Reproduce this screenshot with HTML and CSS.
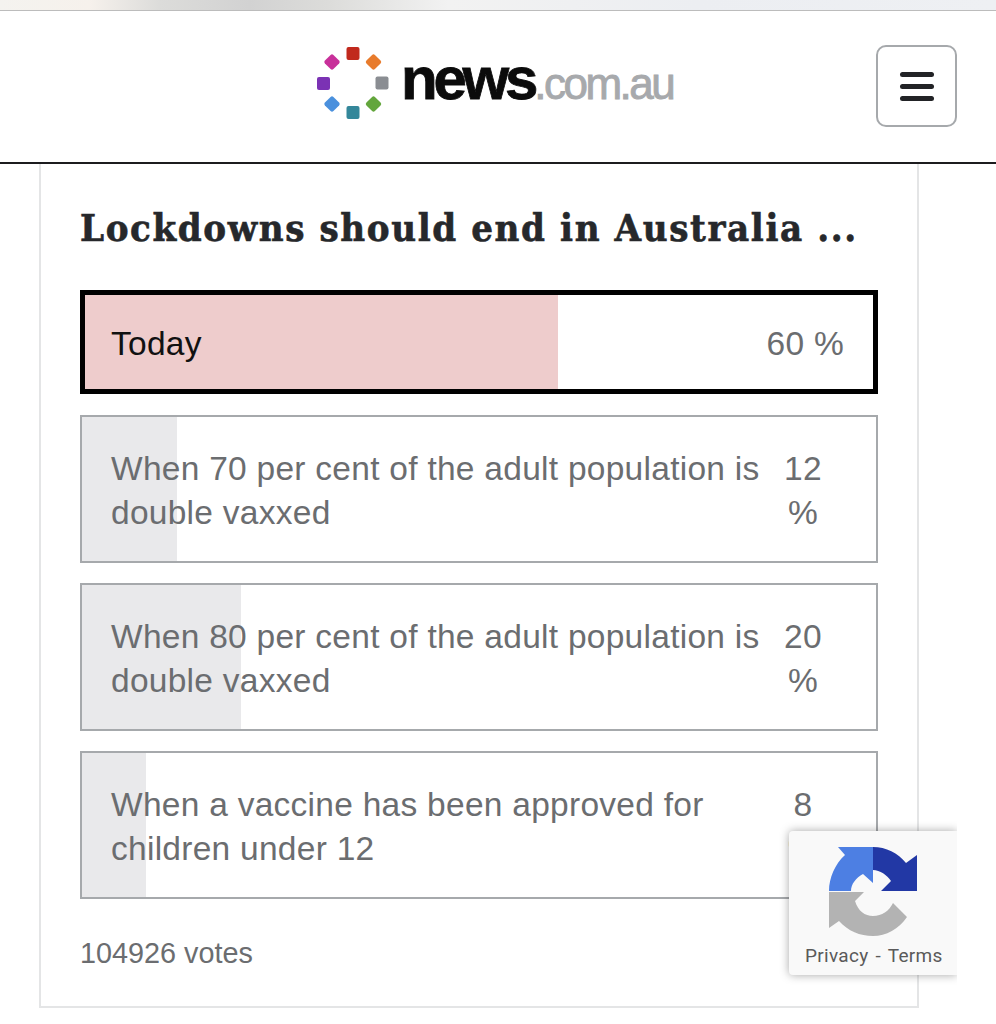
FILE: index.html
```html
<!DOCTYPE html>
<html>
<head>
<meta charset="utf-8">
<title>news.com.au poll</title>
<link rel="stylesheet" href="styles.css">
</head>
<body>
<div class="browser-strip"></div>
<header>
	<div class="logo">
		<svg class="logo-mark" width="72" height="72" viewBox="0 0 72 72">
			<rect x="29.5" y="0" width="13" height="13" rx="2" fill="#c1291d"/>
			<rect x="59.5" y="30" width="13" height="13" rx="2" fill="#8a8d92" transform="translate(-1 -.5)"/>
			<rect x="29.5" y="60" width="13" height="13" rx="2" fill="#34879a" transform="translate(0 -1)"/>
			<rect x="0" y="30" width="13" height="13" rx="2" fill="#7b32b4"/>
			<rect x="50.5" y="9" width="12" height="12" rx="2" fill="#e87b2c" transform="rotate(45 56.5 15)"/>
			<rect x="50.5" y="51" width="12" height="12" rx="2" fill="#63a63c" transform="rotate(45 56.5 57)"/>
			<rect x="9" y="51" width="12" height="12" rx="2" fill="#4a90dd" transform="rotate(45 15 57)"/>
			<rect x="9" y="9" width="12" height="12" rx="2" fill="#c8309a" transform="rotate(45 15 15)"/>
		</svg>
		<span class="logo-text"><span class="logo-news">news</span><span class="logo-domain">.com.au</span></span>
	</div>
	<button class="menu-btn">
		<span class="menu-bar"></span>
		<span class="menu-bar"></span>
		<span class="menu-bar"></span>
	</button>
</header>
<section class="poll">
	<h2 class="poll-title">Lockdowns should end in Australia ...</h2>
	<div class="option option-selected">
		<div class="option-fill" style="width: 60%"></div>
		<div class="option-label">Today</div>
		<div class="option-pct">60 %</div>
	</div>
	<div class="option">
		<div class="option-fill" style="width: 12%"></div>
		<div class="option-label">When 70 per cent of the adult population is double vaxxed</div>
		<div class="option-pct">12 %</div>
	</div>
	<div class="option">
		<div class="option-fill" style="width: 20%"></div>
		<div class="option-label">When 80 per cent of the adult population is double vaxxed</div>
		<div class="option-pct">20 %</div>
	</div>
	<div class="option">
		<div class="option-fill" style="width: 8%"></div>
		<div class="option-label">When a vaccine has been approved for children under 12</div>
		<div class="option-pct">8 %</div>
	</div>
	<div class="votes">104926 votes</div>
</section>
<div class="recaptcha">
	<svg class="recaptcha-icon" width="89" height="90" viewBox="0 0 89 90">
		<path d="M0 45C0 32 6 18 16 9L9 1H44V37L34 28C27 32 22 38 22 45Z" fill="#4d7fe3"/>
		<path d="M44 1C57 1 69 7 77 17L88 9V45H52L62 35C58 29 51 24 44 24Z" fill="#2238a5"/>
		<path d="M0 46H35L26 55C29 65 36 70 44 70C53 70 60 65 64 57L78 71C70 83 57 90 44 90C31 90 19 85 10 75L0 82Z" fill="#b3b3b3"/>
	</svg>
	<div class="recaptcha-links">Privacy - Terms</div>
</div>
</body>
</html>
```

FILE: styles.css
```css
body {
	margin: 0px;
	height: 1024px;
	overflow: hidden;
	position: relative;
	background-color: white;
	font-family: "Liberation Sans", Arial, sans-serif;
}
.browser-strip {
	height: 10px;
	background: linear-gradient(to right, #f4f3ef 0%, #f6f1ec 9%, #dcdcda 16%, #d2d2d2 25%, #dcdcda 33%, #f2f2f2 45%, #eceef2 70%, #eef0f3 100%);
	border-bottom: 1px solid #bcbcbc;
}
header {
	display: flex;
	align-items: center;
	box-sizing: border-box;
	height: 153px;
	padding: 0 39px 0 317px;
	border-bottom: 2px solid #1c1c1e;
}
.logo {
	display: flex;
	align-items: center;
	margin-top: -7px;
}
.logo-mark {
	overflow: visible;
}
.logo-text {
	margin-left: 12px;
	margin-bottom: 9px;
	white-space: nowrap;
}
.logo-news {
	font-size: 60px;
	font-weight: 700;
	letter-spacing: -4.2px;
	color: #0b0b0b;
	-webkit-text-stroke: 0.8px #0b0b0b;
}
.logo-domain {
	font-size: 44px;
	letter-spacing: -2.5px;
	color: #a7a9ac;
	-webkit-text-stroke: 0.9px #a7a9ac;
}
.menu-btn {
	display: flex;
	flex-direction: column;
	align-items: center;
	justify-content: center;
	gap: 7px;
	box-sizing: border-box;
	width: 81px;
	height: 82px;
	margin-left: auto;
	margin-top: -1px;
	padding: 0;
	background-color: white;
	border: 2px solid #a6a9ac;
	border-radius: 10px;
}
.menu-bar {
	width: 34px;
	height: 5px;
	border-radius: 3px;
	background-color: #222326;
}
.poll {
	box-sizing: border-box;
	width: 880px;
	height: 844px;
	margin-left: 39px;
	padding: 42px 39px 0;
	border: 2px solid #e4e5e6;
	border-top: none;
}
.poll-title {
	margin: 0 0 40px;
	font-family: "DejaVu Serif Condensed", "DejaVu Serif", serif;
	font-stretch: condensed;
	font-size: 38px;
	line-height: 44px;
	font-weight: 700;
	letter-spacing: 1.6px;
	color: #26282b;
	-webkit-text-stroke: 0.6px #26282b;
	white-space: nowrap;
}
.option {
	position: relative;
	display: flex;
	box-sizing: border-box;
	margin-bottom: 20px;
	padding: 30px 45px 26px 29px;
	border: 2px solid #a6a9ac;
	font-size: 33.5px;
	letter-spacing: 0.27px;
	line-height: 44px;
	color: #6b6d70;
}
.option-selected {
	margin-bottom: 21px;
	padding: 27px 29px 23px 26px;
	border: 5px solid #000000;
	color: #111111;
}
.option-fill {
	position: absolute;
	top: 0;
	bottom: 0;
	left: 0;
	background-color: #e9e9eb;
}
.option-selected .option-fill {
	background-color: #eecccc;
}
.option-label {
	position: relative;
	flex: 1;
}
.option-pct {
	position: relative;
	width: 56px;
	margin-left: 10px;
	text-align: center;
}
.option-selected .option-pct {
	width: auto;
	color: #6b6d70;
}
.votes {
	margin-top: 34px;
	font-size: 28.8px;
	line-height: 40px;
	color: #6b6d70;
}
.recaptcha {
	position: absolute;
	top: 831px;
	left: 789px;
	box-sizing: border-box;
	width: 168px;
	height: 144px;
	padding: 15px 0 0 40px;
	background-color: #f9f9f9;
	border-radius: 4px 0 0 4px;
	box-shadow: 0 0 10px rgba(0, 0, 0, 0.35);
	clip-path: inset(-20px 0 -20px -20px);
}
.recaptcha-icon {
	display: block;
}
.recaptcha-links {
	margin: 9px 0 0 -24px;
	font-family: Roboto, sans-serif;
	font-size: 19px;
	letter-spacing: 0.3px;
	word-spacing: 2px;
	line-height: 22px;
	color: #5a5a5a;
	white-space: nowrap;
}
```
